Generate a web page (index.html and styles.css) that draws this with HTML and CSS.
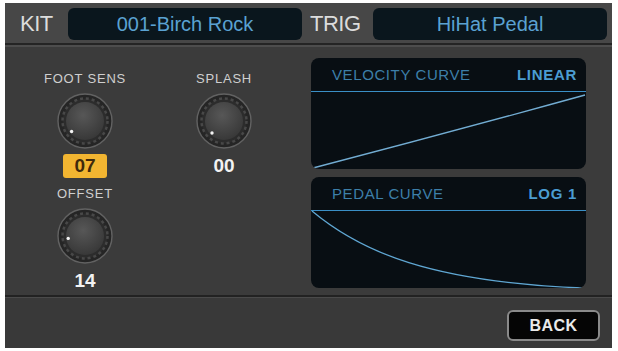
FILE: index.html
```html
<!DOCTYPE html>
<html>
<head>
    <meta charset="utf-8">
    <title>Trigger Settings</title>
    <link rel="stylesheet" href="styles.css">
</head>
<body>
<div class="screen">
    <div class="topbar">
        <span class="tag tag-kit">KIT</span>
        <div class="field">001-Birch Rock</div>
        <span class="tag tag-trig">TRIG</span>
        <div class="field">HiHat Pedal</div>
    </div>

    <div class="main">
        <div class="knobs">
            <div class="knob-cell">
                <div class="knob-label">FOOT SENS</div>
                <svg class="knob" width="56" height="56" viewBox="0 0 56 56">
                    <defs>
                        <radialGradient id="cap" cx="45%" cy="35%" r="70%">
                            <stop offset="0" stop-color="#575757"/>
                            <stop offset="1" stop-color="#363636"/>
                        </radialGradient>
                    </defs>
                    <circle cx="28" cy="28" r="27" fill="#252525" stroke="#626262" stroke-width="1.4"/>
                    <circle cx="28" cy="28" r="22.5" fill="#2c2c2c" stroke="#484848" stroke-width="2.5" stroke-dasharray="3 2.9"/>
                    <circle cx="28" cy="28" r="19" fill="url(#cap)"/>
                    <circle cx="14.6" cy="38.5" r="1.7" fill="#f4f4f4"/>
                </svg>
                <div class="value badge">07</div>
            </div>
            <div class="knob-cell">
                <div class="knob-label">SPLASH</div>
                <svg class="knob" width="56" height="56" viewBox="0 0 56 56">
                    <circle cx="28" cy="28" r="27" fill="#252525" stroke="#626262" stroke-width="1.4"/>
                    <circle cx="28" cy="28" r="22.5" fill="#2c2c2c" stroke="#484848" stroke-width="2.5" stroke-dasharray="3 2.9"/>
                    <circle cx="28" cy="28" r="19" fill="url(#cap)"/>
                    <circle cx="16" cy="40" r="1.7" fill="#f4f4f4"/>
                </svg>
                <div class="value">00</div>
            </div>
            <div class="knob-cell">
                <div class="knob-label">OFFSET</div>
                <svg class="knob" width="56" height="56" viewBox="0 0 56 56">
                    <circle cx="28" cy="28" r="27" fill="#252525" stroke="#626262" stroke-width="1.4"/>
                    <circle cx="28" cy="28" r="22.5" fill="#2c2c2c" stroke="#484848" stroke-width="2.5" stroke-dasharray="3 2.9"/>
                    <circle cx="28" cy="28" r="19" fill="url(#cap)"/>
                    <circle cx="11.2" cy="30.4" r="1.7" fill="#f4f4f4"/>
                </svg>
                <div class="value">14</div>
            </div>
        </div>

        <div class="curves">
            <div class="panel">
                <div class="panel-head">
                    <span class="panel-title">VELOCITY CURVE</span>
                    <span class="panel-mode">LINEAR</span>
                </div>
                <svg class="graph" width="275" height="77" viewBox="0 0 275 77">
                    <path d="M2,76 Q140,40 274,3" fill="none" stroke="#72acd2" stroke-width="1.3"/>
                </svg>
            </div>
            <div class="panel">
                <div class="panel-head">
                    <span class="panel-title">PEDAL CURVE</span>
                    <span class="panel-mode">LOG 1</span>
                </div>
                <svg class="graph" width="275" height="78" viewBox="0 0 275 78">
                    <path d="M1,0 C50,41 120,71 272,77" fill="none" stroke="#5fa6d2" stroke-width="1.3"/>
                </svg>
            </div>
        </div>
    </div>

    <div class="bottombar">
        <button class="back">BACK</button>
    </div>
</div>
</body>
</html>
```

FILE: styles.css
```css
body {
    margin: 0;
    background: #fff;
    font-family: "Liberation Sans", Arial, sans-serif;
}

.screen {
    width: 607px;
    height: 345px;
    margin: 3px 0 0 5px;
    background: #3c3c3c;
    display: flex;
    flex-direction: column;
}

/* top bar */
.topbar {
    height: 38px;
    padding-top: 2px;
    display: flex;
    align-items: center;
    background: #474747;
    border-bottom: 2px solid #242424;
}

.tag {
    color: #dcdcdc;
    font-size: 22px;
    letter-spacing: -0.5px;
}

.tag-kit {
    width: 48px;
    padding-left: 15px;
    box-sizing: content-box;
}

.tag-trig {
    width: 63px;
    padding-left: 8px;
}

.field {
    width: 234px;
    height: 32px;
    line-height: 32px;
    border-radius: 6px;
    background: #0a161d;
    color: #5aa2d2;
    font-size: 20px;
    text-align: center;
}

/* main area */
.main {
    height: 248px;
    display: flex;
    justify-content: space-between;
    border-top: 2px solid #4d4d4d;
    border-bottom: 2px solid #222;
    background: #3b3b3b;
}

.knobs {
    margin: 25px 0 0 40px;
    display: grid;
    grid-template-columns: 80px 80px;
    column-gap: 59px;
    row-gap: 9px;
    align-content: start;
}

.knob-cell {
    display: flex;
    flex-direction: column;
    align-items: center;
}

.knob-label {
    color: #cfcfcf;
    font-size: 13px;
    line-height: 14px;
    letter-spacing: 0.8px;
    white-space: nowrap;
}

.knob {
    display: block;
    margin-top: 7px;
}

.value {
    margin-top: 5px;
    height: 24px;
    line-height: 24px;
    color: #f2f2f2;
    font-size: 19px;
    font-weight: bold;
}

.badge {
    width: 44px;
    border-radius: 3px;
    background: #f2b531;
    color: #3f2a0c;
    text-align: center;
}

.curves {
    margin: 11px 26px 0 0;
    display: flex;
    flex-direction: column;
    gap: 8px;
}

.panel {
    width: 275px;
    height: 111px;
    border-radius: 8px;
    background: #080e13;
    overflow: hidden;
}

.panel-head {
    height: 33px;
    display: flex;
    align-items: center;
    justify-content: space-between;
    padding: 0 9px 0 21px;
    border-bottom: 1.5px solid #3a8fc6;
}

.panel-title {
    color: #3d7fa9;
    font-size: 15px;
    letter-spacing: 0.6px;
}

.panel-mode {
    color: #4b9dd2;
    font-size: 15px;
    font-weight: bold;
    letter-spacing: 0.7px;
}

.graph {
    display: block;
}

/* bottom bar */
.bottombar {
    flex: 1;
    display: flex;
    justify-content: flex-end;
    align-items: flex-start;
    padding: 12px 12px 0 0;
    border-top: 1px solid #4a4a4a;
    background: #393939;
}

.back {
    width: 93px;
    height: 31px;
    border: 2px solid #8a8a8a;
    border-radius: 6px;
    background: #050505;
    color: #eaeaea;
    font-family: "Liberation Sans", Arial, sans-serif;
    font-size: 16px;
    font-weight: bold;
    letter-spacing: 0.5px;
}
```
